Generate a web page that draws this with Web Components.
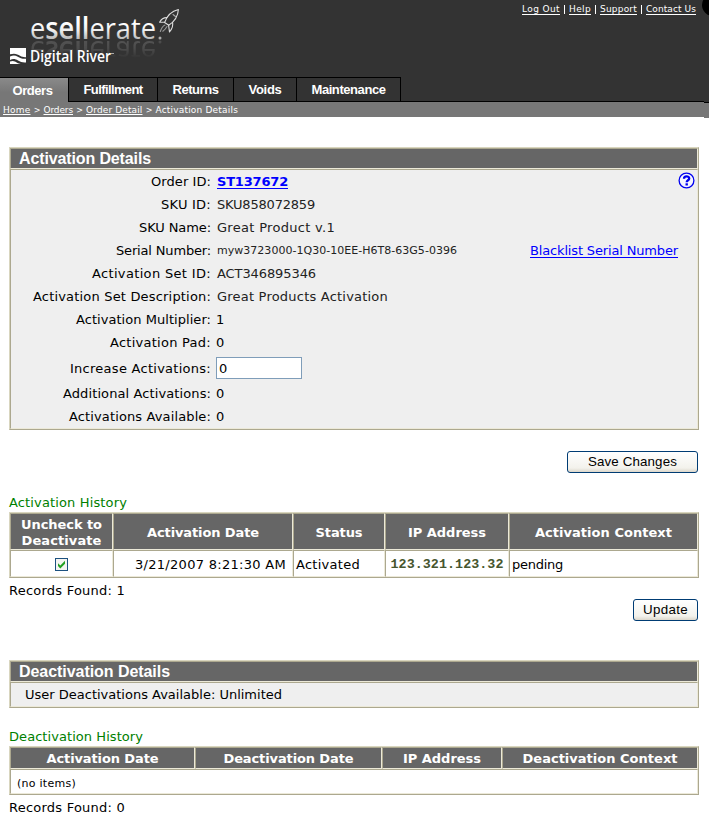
<!DOCTYPE html>
<html lang="en">
<head>
<meta charset="utf-8">
<title>Activation Details</title>
<style>
  html, body { margin: 0; padding: 0; background: #fff; }
  body { width: 709px; height: 835px; overflow: hidden; font: 13px/16px "DejaVu Sans", sans-serif; color: #000; }
</style>
</head>
<body>
<activation-page></activation-page>
<script>
const define = (name, html, setup) => customElements.define(name, class extends HTMLElement {
  connectedCallback() {
    if (this.shadowRoot) return;
    const t = document.createElement('template');
    t.innerHTML = html;
    this.attachShadow({ mode: 'open' }).append(t.content.cloneNode(true));
    if (setup) setup(this, this.shadowRoot);
  }
});

/* A run of text tracked so that it fills the width given in "w". */
define('fit-text', `
<style>
  :host { display: inline-block; white-space: nowrap; flex: none; }
  span { display: inline-block; }
  :host([link]) span { text-decoration: underline; text-underline-offset: var(--uo, 2px); text-decoration-thickness: 1px; text-decoration-skip-ink: none; }
</style><span><slot></slot></span>`, (host, root) => {
  const w = +host.getAttribute('w');
  if (!w) return;
  const span = root.querySelector('span');
  host.style.width = w + 'px';
  const n = host.textContent.length;
  span.style.letterSpacing = ((w - span.getBoundingClientRect().width) / n).toFixed(3) + 'px';
});

define('brand-logo', `
<style>:host { display: block; } svg { display: block; }</style>
<svg width="200" height="77" viewBox="0 0 200 77">
  <defs>
    <linearGradient id="metal" gradientUnits="userSpaceOnUse" x1="0" y1="16" x2="0" y2="40">
      <stop offset="0.3" stop-color="#fff"/><stop offset="0.6" stop-color="#eee"/><stop offset="1" stop-color="#b4b4b4"/>
    </linearGradient>
    <linearGradient id="fade" gradientUnits="userSpaceOnUse" x1="0" y1="40" x2="0" y2="22">
      <stop offset="0" stop-color="#fff" stop-opacity=".24"/><stop offset="0.5" stop-color="#fff" stop-opacity=".13"/><stop offset="1" stop-color="#fff" stop-opacity="0"/>
    </linearGradient>
    <mask id="m" maskUnits="userSpaceOnUse" x="0" y="0" width="200" height="44"><rect width="200" height="44" fill="url(#fade)"/></mask>
    <g id="word">
      <text x="30" y="39" font-family="Open Sans, sans-serif" font-size="30" textLength="126" lengthAdjust="spacingAndGlyphs" fill="url(#metal)"><tspan>e</tspan><tspan font-weight="600">sell</tspan><tspan>erate</tspan></text>
      <circle cx="160" cy="38" r="1.500" fill="#aaa"/>
    </g>
  </defs>
  <use href="#word"/>
  <g transform="matrix(1 0 0 -1 0 80)"><g mask="url(#m)"><use href="#word"/></g></g>
  <g fill="none" stroke="#ddd" stroke-width="1.100" stroke-linejoin="round" stroke-linecap="round">
    <path d="M178.400 9.500C172 11 167 15.500 164.600 22.500L168.800 25.200C174.600 21.500 178 16 178.400 9.500Z"/>
    <path d="M167 17.600C163.500 17.500 161 19.500 159.600 22.300L164.600 22.300M172.500 22.200C173.400 25.500 172 29 169.500 32L168.600 25.200"/>
    <path d="M165 25C162.700 26 161.300 28.300 160.300 31.500M167 26.500C166 28.500 164.500 30 162.800 31.200" stroke="#999"/>
    <path d="M173 14.500L175.500 16.500" stroke="#aaa"/>
  </g>
  <rect x="10" y="48" width="16" height="16" fill="#fff"/>
  <path d="M10 54.300C15 52.900 17.500 54.200 20 55.800C22 57 24 57.400 26 57.200V58.700C22.500 59 20 58 17.800 56.700C15 55.100 13 55.200 10 56.500Z" fill="#333"/>
  <path d="M10 60C13 58.500 15.500 59 18 60.600C20.500 62.200 23 62.800 26 62.500V64.200H22C18.500 64 17 62.700 15.500 61.800C13.500 60.700 12 60.700 10 61.500Z" fill="#333"/>
  <text x="30" y="61.500" font-family="Open Sans, sans-serif" font-weight="600" font-size="15.500" textLength="81" lengthAdjust="spacingAndGlyphs" fill="#fff">Digital River</text>
  <rect x="111" y="53" width="3" height="1" fill="#aaa"/>
</svg>`);

define('top-links', `
<style>
  :host { display: flex; align-items: center; gap: 4px; height: 18px; font: 9px/18px "DejaVu Sans", sans-serif; color: #fff; --uo: 2px; }
  i { width: 1px; height: 9px; background: #fff; flex: none; }
</style>
<fit-text link w="38">Log Out</fit-text><i></i><fit-text link w="22">Help</fit-text><i></i><fit-text link w="37">Support</fit-text><i></i><fit-text link w="50">Contact Us</fit-text>`);

define('nav-tab', `
<style>
  :host { display: flex; justify-content: center; box-sizing: border-box; height: 25px; border: 1px solid #000; border-left: 0; color: #fff; font: bold 13px/23px "Liberation Sans", sans-serif; flex: none; }
  :host([active]) { background: linear-gradient(#8a8a8a, #777 60%); border-bottom: 0; line-height: 25px; padding-right: 3px; }
</style><slot></slot>`, h => { h.style.width = h.getAttribute('width') + 'px'; });

define('page-header', `
<style>
  :host { display: block; height: 118px; margin-bottom: -1px; position: relative; overflow: hidden; }
  .top { display: flex; justify-content: space-between; height: 77px; padding-right: 13px; background: #333; }
  nav { display: flex; height: 25px; background: linear-gradient(#000,#000) 0 24px / 704px 1px no-repeat, #333; }
  .crumbs { display: flex; align-items: center; height: 15px; padding-left: 3px; background: #777; color: #fff; font: 9px/15px "DejaVu Sans", sans-serif; --uo: 1px; }
  .crumbs fit-text { padding-top: 1px; }
  .crumbs b { font-weight: normal; width: 13px; padding-top: 1px; text-align: center; font-size: 8px; flex: none; }
  .edge { position: absolute; left: 704px; top: 102px; width: 5px; height: 15px; border-top: 1px solid #000; background: #777; }
  .blob { position: absolute; left: 702px; top: -6px; width: 22px; height: 22px; border-radius: 50%; background: #000; }
</style>
<div class="top"><brand-logo></brand-logo><top-links></top-links></div>
<nav>
  <nav-tab active width="69"><fit-text w="40">Orders</fit-text></nav-tab>
  <nav-tab width="89"><fit-text w="59">Fulfillment</fit-text></nav-tab>
  <nav-tab width="76"><fit-text w="46">Returns</fit-text></nav-tab>
  <nav-tab width="63"><fit-text w="33">Voids</fit-text></nav-tab>
  <nav-tab width="104"><fit-text w="74">Maintenance</fit-text></nav-tab>
</nav>
<div class="crumbs"><fit-text link w="27.500">Home</fit-text><b>&gt;</b><fit-text link w="29.500">Orders</fit-text><b>&gt;</b><fit-text link w="56.500">Order Detail</fit-text><b>&gt;</b><fit-text w="82.500">Activation Details</fit-text></div>
<div class="edge"></div><div class="blob"></div>`);

const bevel = `
  .frame { box-sizing: border-box; width: 690px; border: 1px solid; border-color: #d9d6bf #aca88f #aca88f #d9d6bf; }
  .cell { box-sizing: border-box; border: 1px solid; border-color: #aca88f #ece9d8 #ece9d8 #aca88f; }
`;

define('detail-panel', `
<style>${bevel}
  :host { display: block; }
  .title { height: 21px; background: #666; color: #fff; font: bold 16px/19px "Liberation Sans", sans-serif; padding-left: 8px; }
  .body { background: #efefef; }
</style>
<div class="frame"><div class="cell title"><slot name="title"></slot></div><div class="cell body"><slot></slot></div></div>`);

define('detail-row', `
<style>
  :host { display: grid; grid-template-columns: 200px 300px auto; column-gap: 6px; align-items: center; height: var(--h, 23px); }
  .label { text-align: right; padding-top: var(--drop, 0); }
  .value { display: flex; }
  :host([tight]) { column-gap: 5px; }
  .aside { padding-left: 7px; color: #00f; }
</style>
<div class="label"><slot name="label"></slot></div><div class="value"><slot></slot></div><div class="aside"><slot name="aside"></slot></div>`);

define('help-icon', `
<style>:host { display: block; } svg { display: block; }</style>
<svg width="17" height="17" viewBox="0 0 17 17"><circle cx="8.500" cy="8.500" r="7.400" fill="#f6f6ff" stroke="#0000f0" stroke-width="1.300"/><path d="M6 6.800C6 3.700 11.200 3.700 11.200 6.500C11.200 8.300 8.700 8.300 8.700 10.300" fill="none" stroke="#0000f0" stroke-width="2.300"/><rect x="7.500" y="11.300" width="2.400" height="2.200" fill="#0000f0"/></svg>`);

define('text-field', `
<style>:host { display: block; box-sizing: border-box; width: 86px; height: 22px; border: 1px solid #7f9db9; background: #fff; padding-left: 2px; line-height: 21px; }</style><slot></slot>`);

define('push-button', `
<style>:host { display: flex; justify-content: center; box-sizing: border-box; height: 22px; border: 1px solid #003c74; border-radius: 3px; background: linear-gradient(#fff, #f3f2ec 80%, #dcd7cb); font: 13.333px/19px "Liberation Sans", sans-serif; }</style><slot></slot>`,
h => { h.style.width = h.getAttribute('width') + 'px'; });

define('check-box', `
<style>:host { display: block; } svg { display: block; }</style>
<svg width="13" height="13" viewBox="0 0 13 13"><rect x=".5" y=".5" width="12" height="12" fill="#f4f4f1" stroke="#1c5180"/><path d="M3 5.200L5.300 7.500L10 2.800V5.700L5.300 10.400L3 8.100Z" fill="#21a121"/></svg>`);

/* Bevelled table; "cols" sets the tracks, children go in as cells. */
define('grid-table', `
<style>${bevel}
  :host { display: block; }
  .frame { display: grid; }
</style><div class="frame"><slot></slot></div>`, (h, r) => {
  const f = r.querySelector('.frame');
  f.style.gridTemplateColumns = h.getAttribute('cols');
  f.style.gridTemplateRows = h.getAttribute('rows');
});

define('grid-cell', `
<style>
  :host { display: flex; align-items: center; box-sizing: border-box; border: 1px solid; border-color: #aca88f #ece9d8 #ece9d8 #aca88f; padding: 2px 0 0 2px; min-width: 0; }
  :host([head]) { background: #666; color: #fff; font-weight: bold; flex-direction: column; justify-content: center; padding: 2px 0 0; }
  :host([center]) { justify-content: center; padding: 0; }
  :host([end]) { justify-content: flex-end; padding-right: 6px; }
  :host([mono]) { font: bold 13.333px/16px "Liberation Mono", monospace; color: #46562e; padding-top: 2px; }
  :host([wide]) { grid-column: 1 / -1; font-size: 11px; padding: 4px 0 0 6px; }
</style><slot></slot>`);

define('activation-page', `
<style>
  :host { display: block; }
  main { display: flex; flex-direction: column; padding: 30px 0 0 9px; width: 690px; }
  .caption { color: #008000; }
  push-button { align-self: flex-end; margin-right: 1px; }
  .help { position: absolute; left: 678px; top: 172px; }
  .order { color: #00f; font-weight: bold; }
  .thin { color: #222; }
  .serial { font-size: 11px; color: #222; }
</style>
<page-header></page-header>
<main>
  <detail-panel>
    <fit-text slot="title" w="132">Activation Details</fit-text>
    <detail-row><fit-text slot="label" w="60">Order ID:</fit-text><fit-text class="order" link w="71">ST137672</fit-text></detail-row>
    <detail-row><fit-text slot="label" w="50">SKU ID:</fit-text><fit-text class="thin" w="98">SKU858072859</fit-text></detail-row>
    <detail-row><fit-text slot="label" w="72">SKU Name:</fit-text><fit-text class="thin" w="118">Great Product v.1</fit-text></detail-row>
    <detail-row><fit-text slot="label" w="95">Serial Number:</fit-text><fit-text class="serial" w="240">myw3723000-1Q30-10EE-H6T8-63G5-0396</fit-text><fit-text slot="aside" link w="148">Blacklist Serial Number</fit-text></detail-row>
    <detail-row><fit-text slot="label" w="119">Activation Set ID:</fit-text><fit-text class="thin" w="99">ACT346895346</fit-text></detail-row>
    <detail-row><fit-text slot="label" w="178">Activation Set Description:</fit-text><fit-text class="thin" w="171">Great Products Activation</fit-text></detail-row>
    <detail-row tight><fit-text slot="label" w="135">Activation Multiplier:</fit-text>1</detail-row>
    <detail-row tight><fit-text slot="label" w="101">Activation Pad:</fit-text>0</detail-row>
    <detail-row tight style="--h:28px;--drop:2px"><fit-text slot="label" w="141">Increase Activations:</fit-text><text-field>0</text-field></detail-row>
    <detail-row tight><fit-text slot="label" w="148">Additional Activations:</fit-text>0</detail-row>
    <detail-row tight><fit-text slot="label" w="142">Activations Available:</fit-text>0</detail-row>
  </detail-panel>
  <push-button width="131" style="margin-top:21px"><fit-text w="89">Save Changes</fit-text></push-button>
  <div class="caption" style="margin-top:22px"><fit-text w="118">Activation History</fit-text></div>
  <grid-table cols="103px 180px 92px 124px 189px" rows="37px 27px" style="margin-top:1px">
    <grid-cell head><fit-text w="81">Uncheck to</fit-text><fit-text w="80">Deactivate</fit-text></grid-cell>
    <grid-cell head><fit-text w="112">Activation Date</fit-text></grid-cell>
    <grid-cell head><fit-text w="47">Status</fit-text></grid-cell>
    <grid-cell head><fit-text w="78">IP Address</fit-text></grid-cell>
    <grid-cell head><fit-text w="137">Activation Context</fit-text></grid-cell>
    <grid-cell center style="padding-top:2px"><check-box></check-box></grid-cell>
    <grid-cell end><fit-text w="151">3/21/2007 8:21:30 AM</fit-text></grid-cell>
    <grid-cell><fit-text w="64">Activated</fit-text></grid-cell>
    <grid-cell mono center><fit-text w="113">123.321.123.32</fit-text></grid-cell>
    <grid-cell><fit-text w="51">pending</fit-text></grid-cell>
  </grid-table>
  <div style="margin-top:5px"><fit-text w="116">Records Found: 1</fit-text></div>
  <push-button width="65"><fit-text w="45">Update</fit-text></push-button>
  <detail-panel style="margin-top:39px">
    <fit-text slot="title" w="151">Deactivation Details</fit-text>
    <div style="height:23px;line-height:23px;padding-left:14px"><fit-text w="257">User Deactivations Available: Unlimited</fit-text></div>
  </detail-panel>
  <div class="caption" style="margin-top:21px"><fit-text w="134">Deactivation History</fit-text></div>
  <grid-table cols="185px 187px 120px 196px" rows="22px 25px" style="margin-top:1px">
    <grid-cell head><fit-text w="112">Activation Date</fit-text></grid-cell>
    <grid-cell head><fit-text w="130">Deactivation Date</fit-text></grid-cell>
    <grid-cell head><fit-text w="78">IP Address</fit-text></grid-cell>
    <grid-cell head><fit-text w="155">Deactivation Context</fit-text></grid-cell>
    <grid-cell wide><fit-text w="59">(no items)</fit-text></grid-cell>
  </grid-table>
  <div style="margin-top:5px"><fit-text w="116">Records Found: 0</fit-text></div>
</main>
<help-icon class="help"></help-icon>`);
</script>
</body>
</html>
